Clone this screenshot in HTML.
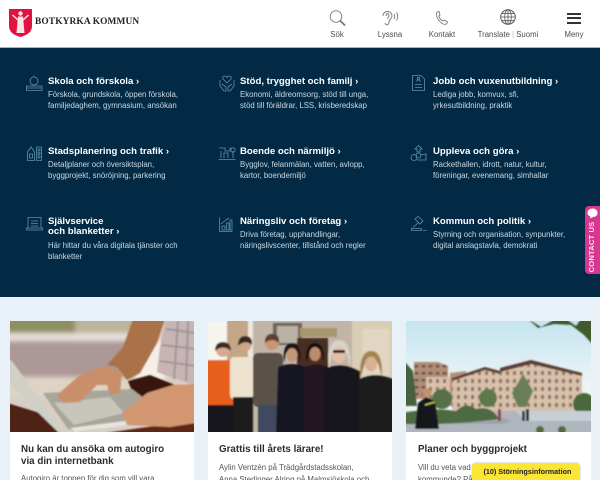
<!DOCTYPE html>
<html lang="sv"><head><meta charset="utf-8"><title>Botkyrka kommun</title>
<style>
*{box-sizing:border-box}
html,body{margin:0;padding:0;width:600px;height:480px;overflow:hidden}
body{background:#e8f1f8;font-family:"Liberation Sans",sans-serif}
#wrap{position:relative;width:600px;height:480px;overflow:hidden;background:#e8f1f8}
.a{position:absolute;white-space:nowrap}
#hdr{left:0;top:0;width:600px;height:48px;background:#fff;border-bottom:1px solid #a9b4bb}
#panel{left:0;top:48px;width:600px;height:249px;background:#022a45}
.nl{font-size:7.8px;color:#4d4d4d;transform:translateX(-50%);top:30px;line-height:10px}
.h{font-size:9.6px;font-weight:bold;color:#fff;line-height:10.5px;margin-top:.8px}
.d{font-size:7.8px;color:#cbd8e0;line-height:11.2px}
.card{background:#fff;top:321px;height:160px;overflow:hidden}
.ct{font-size:9.8px;font-weight:bold;color:#2c2c2c;line-height:11.5px}
.cd{font-size:7.8px;color:#555;line-height:11.5px}
svg{position:absolute;overflow:hidden}
.ic{fill:none;stroke:#5d94ad;stroke-width:.8}
.hi{fill:none;stroke:#777;stroke-width:.9}
</style></head><body><div id="wrap">
<div class="a" id="hdr"></div>
<svg style="left:9px;top:9px" width="23" height="28" viewBox="0 0 23 28"><path d="M0 0H23V17Q23 25 11.500 28Q0 25 0 17Z" fill="#e0123f"/><circle cx="11.500" cy="4.500" r="2.200" fill="#fbe4e8"/><path d="M9 7.500H14L15.500 24H7.500Z" fill="#fbe4e8"/><path d="M3.500 6L9 11M19.500 6L14 11" stroke="#fbe4e8" stroke-width="1.500"/></svg>
<div class="a" style="left:35px;top:14.500px;font:bold 9.400px/14px 'Liberation Serif',serif;color:#222;letter-spacing:.13px">BOTKYRKA KOMMUN</div>

<svg style="left:329px;top:10px" width="18" height="17" viewBox="0 0 18 17"><circle cx="7" cy="6.500" r="5.800" class="hi"/><path d="M11 10.500L16 15.500" stroke="#777" stroke-width="1.800"/></svg>
<svg style="left:381px;top:10px" width="18" height="16" viewBox="0 0 18 16"><path d="M2 6C2 0 11 0 11 6C11 9 8 9 8 12C8 15 5 16 4 13M5 6C5 3 8 3 8 6C8 7 6.500 7 6.500 9" class="hi"/><path d="M13 4Q14.500 6.500 13 9M15.500 2.500Q18 6.500 15.500 10.500" class="hi"/></svg>
<svg style="left:435px;top:11px" width="14" height="14" viewBox="0 0 14 14"><path d="M2 1L4 .5L5 4L3.800 5Q4.500 8 8 10L9.500 9L12.500 11L11.500 13Q8 14.500 4 9.500Q.5 5 2 1Z" class="hi"/></svg>
<svg style="left:500px;top:9px" width="16" height="16" viewBox="0 0 16 16"><circle cx="8" cy="8" r="7.300" fill="none" stroke="#555" stroke-width="1"/><ellipse cx="8" cy="8" rx="3.300" ry="7.300" fill="none" stroke="#555" stroke-width=".8"/><path d="M8 .7V15.300M.7 8H15.300M1.700 4.300H14.300M1.700 11.700H14.300" stroke="#555" stroke-width=".8"/></svg>
<div class="a" style="left:567px;top:12.500px;width:14px;height:2.400px;background:#333"></div>
<div class="a" style="left:567px;top:17px;width:14px;height:2.400px;background:#333"></div>
<div class="a" style="left:567px;top:21.500px;width:14px;height:2.400px;background:#333"></div>
<div class="a nl" style="left:337px">Sök</div>
<div class="a nl" style="left:390px">Lyssna</div>
<div class="a nl" style="left:442px">Kontakt</div>
<div class="a nl" style="left:508px">Translate <span style="color:#bbb">|</span> Suomi</div>
<div class="a nl" style="left:574px">Meny</div>

<div class="a" id="panel"></div>

<svg style="left:26px;top:75px" width="17" height="17" viewBox="0 0 17 17"><circle cx="8" cy="6" r="4" class="ic"/><path d="M8 2V.5M.5 11H16V15.500H.5ZM.5 13H16" class="ic"/></svg>
<svg style="left:219px;top:75px" width="16" height="17" viewBox="0 0 16 17"><path d="M8 8L4 4Q3 1 5.500 1Q7 1 8 2.500Q9 1 10.500 1Q13 1 12 4Z" class="ic"/><path d="M1 5V11L5 16H7V12L3 9M15 5V11L11 16H9V12L13 9" class="ic"/></svg>
<svg style="left:412px;top:75px" width="13" height="16" viewBox="0 0 13 16"><path d="M.5 .5H9L12.500 4V15.500H.5ZM3 9.500H10M3 12.500H10M4.500 6.500Q6.500 3 8.500 6.500" class="ic"/><circle cx="6.500" cy="3.500" r="1.300" class="ic"/></svg>
<svg style="left:27px;top:146px" width="15" height="15" viewBox="0 0 15 15"><path d="M.5 14.500V6L4 1L7.500 6V14.500ZM2.500 8H5.500V12H2.500ZM9.500 1H14.500V14.500H9.500Z" class="ic"/><circle cx="12" cy="4" r="1.100" class="ic"/><circle cx="12" cy="7.500" r="1.100" class="ic"/><circle cx="12" cy="11" r="1.100" class="ic"/></svg>
<svg style="left:218px;top:147px" width="18" height="14" viewBox="0 0 18 14"><path d="M1 1H7V4H12V1H13M3 4V11M15 11V4M.5 12.500H17.500M6 11V6H10V11" class="ic"/><circle cx="15" cy="3" r="2.200" class="ic"/></svg>
<svg style="left:410px;top:145px" width="17" height="17" viewBox="0 0 17 17"><path d="M8.500 .5L12 4H10V7H7V4H5Z" class="ic"/><circle cx="4" cy="12.500" r="3" class="ic"/><circle cx="8.500" cy="10.500" r="2.500" class="ic"/><path d="M10 10L16 9V15H7" class="ic"/></svg>
<svg style="left:26px;top:217px" width="17" height="14" viewBox="0 0 17 14"><path d="M2 .5H15V11H2ZM.5 11H16.500V13H.5ZM5 4H12M5 6.500H12M5 9H12" class="ic"/></svg>
<svg style="left:219px;top:217px" width="14" height="15" viewBox="0 0 14 15"><path d="M.5 .5V14.500H13.500M3 13V9H6V13ZM7.500 13V6H10V13ZM11 13V3H13V13ZM2 7L7 3L10 1" class="ic"/></svg>
<svg style="left:411px;top:216px" width="16" height="15" viewBox="0 0 16 15"><path d="M4 3L7 .5L12 5L9 8ZM7.500 6.500L2 11.500M.5 14.500H10.500V12.500H.5ZM12 14.500H15.500" class="ic"/></svg>

<div class="a h" style="left:48px;top:76px">Skola och förskola ›</div>
<div class="a d" style="left:48px;top:89px">Förskola, grundskola, öppen förskola,<br>familjedaghem, gymnasium, ansökan</div>
<div class="a h" style="left:240px;top:76px">Stöd, trygghet och familj ›</div>
<div class="a d" style="left:240px;top:89px">Ekonomi, äldreomsorg, stöd till unga,<br>stöd till föräldrar, LSS, krisberedskap</div>
<div class="a h" style="left:433px;top:76px">Jobb och vuxenutbildning ›</div>
<div class="a d" style="left:433px;top:89px">Lediga jobb, komvux, sfi,<br>yrkesutbildning, praktik</div>

<div class="a h" style="left:48px;top:146px">Stadsplanering och trafik ›</div>
<div class="a d" style="left:48px;top:159px">Detaljplaner och översiktsplan,<br>byggprojekt, snöröjning, parkering</div>
<div class="a h" style="left:240px;top:146px">Boende och närmiljö ›</div>
<div class="a d" style="left:240px;top:159px">Bygglov, felanmälan, vatten, avlopp,<br>kartor, boendemiljö</div>
<div class="a h" style="left:433px;top:146px">Uppleva och göra ›</div>
<div class="a d" style="left:433px;top:159px">Rackethallen, idrott, natur, kultur,<br>föreningar, evenemang, simhallar</div>

<div class="a h" style="left:48px;top:216px">Självservice<br>och blanketter ›</div>
<div class="a d" style="left:48px;top:240px">Här hittar du våra digitala tjänster och<br>blanketter</div>
<div class="a h" style="left:240px;top:216px">Näringsliv och företag ›</div>
<div class="a d" style="left:240px;top:229px">Driva företag, upphandlingar,<br>näringslivscenter, tillstånd och regler</div>
<div class="a h" style="left:433px;top:216px">Kommun och politik ›</div>
<div class="a d" style="left:433px;top:229px">Styrning och organisation, synpunkter,<br>digital anslagstavla, demokrati</div>

<div class="a" style="left:585px;top:206px;width:20px;height:68px;background:#d9378f;border-radius:4px"></div>
<svg style="left:587px;top:208px" width="11" height="11" viewBox="0 0 11 11"><path d="M5.500 .5C9 .5 10.500 2.500 10.500 5C10.500 7.500 8.500 9 6 9L3 10.500L3.500 8.500C1.500 8 .5 6.500 .5 5C.5 2.500 2.500 .5 5.500 .5Z" fill="#fff"/></svg>
<div class="a" style="left:592px;top:246.500px;transform:translate(-50%,-50%) rotate(-90deg);font:bold 7.600px/10px 'Liberation Sans',sans-serif;color:#f6e3ee;letter-spacing:.15px">CONTACT US</div>

<!-- Card 1 -->
<div class="a card" style="left:10px;width:184px"></div>
<svg style="left:10px;top:321px" width="184" height="111" viewBox="0 0 184 111"><defs><filter id="b1" x="-10%" y="-10%" width="120%" height="120%"><feGaussianBlur stdDeviation="2.500"/></filter><filter id="b0" x="-5%" y="-5%" width="110%" height="110%"><feGaussianBlur stdDeviation=".8"/></filter></defs>
<rect width="184" height="111" fill="#d8cfc4"/>
<g filter="url(#b1)"><rect x="-5" y="-5" width="70" height="17" fill="#8e8f60"/><rect x="65" y="-5" width="60" height="17" fill="#bdb49e"/><rect x="-5" y="12" width="130" height="8" fill="#e6dfd8"/><rect x="-5" y="20" width="130" height="36" fill="#ad9898"/><rect x="-5" y="56" width="125" height="20" fill="#ded4c4"/><rect x="125" y="20" width="30" height="40" fill="#f4efe8"/></g>
<g filter="url(#b0)">
<path d="M155 0H186V65L147 51L150 26Z" fill="#c8b4b2"/><path d="M156 8L186 12M152 24L186 28M150 40L186 45M168 0L164 58M178 0L176 60" stroke="#8f8a92" stroke-width="1.800" opacity=".8"/>
<path d="M123 -2H155L147 22L130 52L117 59L107 46L97 44L113 26Z" fill="#a9724a"/>
<path d="M118 60L140 54L165 64L150 78L125 78Z" fill="#38170f"/>
<path d="M-3 82L30 92L54 113H-3Z" fill="#4f2016"/><path d="M88 113L186 99V113Z" fill="#5e2818"/>
<path d="M-2 38L2 40L55 113H50L-2 62Z" fill="#d0d0c8"/>
<path d="M33 72L122 68L135 78L118 92L125 102L70 111L58 108Z" fill="#a8a59b"/><path d="M44 82L100 76L114 92L64 104Z" fill="#c8c5bb"/><path d="M60 107L122 99L125 103L66 111Z" fill="#e6e4de"/>
<path d="M47 74L70 54L93 45L112 51L110 72L100 74L97 64L87 64L70 81L53 82Z" fill="#c98f6b"/>
<path d="M112 92L137 72L163 64L186 63V102L160 106L117 104Z" fill="#d29670"/>
</g></svg>
<div class="a ct" style="left:21px;top:444px">Nu kan du ansöka om autogiro<br>via din internetbank</div>
<div class="a cd" style="left:21px;top:473px">Autogiro är toppen för dig som vill vara</div>

<!-- Card 2 -->
<div class="a card" style="left:208px;width:184px"></div>
<svg style="left:208px;top:321px" width="184" height="111" viewBox="0 0 184 111"><rect width="184" height="111" fill="#c2b5a8"/><g filter="url(#b0)">
<rect x="-3" y="-3" width="22" height="50" fill="#f6f4ef"/><rect x="19" y="-3" width="21" height="60" fill="#c4a586"/><rect x="40" y="-3" width="5" height="40" fill="#eee8dd"/>
<rect x="144" y="-3" width="43" height="70" fill="#d9cdb5"/><rect x="155" y="8" width="26" height="50" fill="#e0d6c2"/>
<rect x="65" y="2" width="29" height="22" fill="#6f665a"/><rect x="69" y="5" width="21" height="17" fill="#b9b2a5"/>
<rect x="89" y="17" width="31" height="30" fill="#4a2e24"/><rect x="92" y="7" width="37" height="9" fill="#a8966e"/>
<rect x="-3" y="39" width="34" height="45" rx="4" fill="#e85e1c"/><rect x="-3" y="84" width="32" height="30" fill="#14131a"/><circle cx="15" cy="29" r="7" fill="#d6aa90"/><path d="M7 30Q7 21 15 21Q23 21 23 30Q15 23 7 30Z" fill="#3c2a22"/>
<rect x="22" y="36" width="23" height="42" rx="4" fill="#ece2cd"/><rect x="25" y="76" width="20" height="38" fill="#1b1a1e"/><circle cx="37" cy="24" r="6.500" fill="#cfa68c"/><path d="M30 25Q30 15 37 15Q45 15 44 24Q37 18 30 25Z" fill="#382a22"/>
<rect x="45" y="32" width="30" height="54" rx="5" fill="#5a5148"/><rect x="50" y="84" width="22" height="30" fill="#3f4a5e"/><circle cx="64" cy="22" r="7" fill="#c79676"/><path d="M57 22Q57 13 64 13Q72 13 71 22Q64 16 57 22Z" fill="#5c4030"/>
<path d="M70 46Q84 40 98 46V114H68Z" fill="#191920"/><path d="M76 42Q74 22 84 22Q94 22 92 42L90 32Q84 26 78 32Z" fill="#1c1614"/><ellipse cx="84" cy="34" rx="5.500" ry="7" fill="#c39778"/>
<path d="M96 46Q108 41 120 46V114H96Z" fill="#221820"/><path d="M98 42Q97 22 107 22Q117 22 116 42L113 30Q107 25 102 30Z" fill="#141010"/><ellipse cx="107" cy="33" rx="5.500" ry="7" fill="#bd8c6e"/>
<path d="M116 48Q134 40 152 50V114H116Z" fill="#16161a"/><path d="M121 47Q118 20 131 19Q144 20 142 47L139 33Q131 26 124 33Z" fill="#d8d2c8"/><ellipse cx="131" cy="34" rx="6.500" ry="8" fill="#e3bfa8"/><rect x="125" y="29" width="12" height="3" fill="#222"/>
<path d="M151 58Q167 50 186 58V114H151Z" fill="#1a1a1e"/><path d="M152 58Q151 30 163 30Q175 30 174 56L170 42Q163 36 157 42Z" fill="#a6824f"/><ellipse cx="163" cy="43" rx="6" ry="7.500" fill="#d8b094"/>
</g></svg>
<div class="a ct" style="left:219px;top:444px">Grattis till årets lärare!</div>
<div class="a cd" style="left:219px;top:462px">Aylin Ventzén på Trädgårdstadsskolan,<br>Anna Sterlinger Alring på Malmsjöskola och</div>

<!-- Card 3 -->
<div class="a card" style="left:406px;width:185px"></div>
<svg style="left:406px;top:321px" width="185" height="111" viewBox="0 0 185 111"><defs><linearGradient id="sky" x1="0" y1="0" x2="0" y2="1"><stop offset="0" stop-color="#c4e4f0"/><stop offset=".6" stop-color="#eef5f6"/></linearGradient><pattern id="win" width="7" height="8" patternUnits="userSpaceOnUse"><rect width="7" height="8" fill="#d8c0aa"/><rect x="2" y="2" width="3" height="4" fill="#8a766a"/></pattern><pattern id="win2" width="7" height="7" patternUnits="userSpaceOnUse"><rect width="7" height="7" fill="#b08d76"/><rect x="1.500" y="2" width="4" height="2.500" fill="#6c5548"/></pattern></defs>
<rect width="185" height="111" fill="url(#sky)"/><g filter="url(#b0)">
<path d="M122 -2L135 6L150 -2H160L170 5L175 -2H187V24L178 14L165 4L148 3L132 7Z" fill="#3f5a2f"/>
<path d="M8 41L32 41L42 45V78H8Z" fill="url(#win2)"/>
<path d="M20 56H46L60 52V85H20Z" fill="url(#win)"/><path d="M44 52L60 50V85H44Z" fill="#b59078"/>
<path d="M46 57L79 46L94 50V90H46Z" fill="url(#win)"/><path d="M46 57L79 46L94 50V53L79 49L46 60Z" fill="#5a4030"/>
<path d="M94 47L125 39L176 52V90H94Z" fill="url(#win)"/><path d="M94 47L125 39L176 52V55L125 43L94 51Z" fill="#5b4032"/>
<path d="M-2 40L7 50L11 85H-2Z" fill="#47603c"/><circle cx="36" cy="78" r="10" fill="#567147"/><circle cx="82" cy="77" r="9" fill="#5d7848"/><path d="M117 53L127 70L120 86H112L106 72Z" fill="#6a7f58"/><circle cx="178" cy="83" r="11" fill="#48693d"/>
<rect x="-2" y="90" width="190" height="23" fill="#b0b6bd"/><path d="M110 90H187V100H120Z" fill="#c6ced6"/><path d="M-2 103H95Q112 100 95 97L10 92H-2Z" fill="#9ca4aa"/>
<path d="M-2 92Q25 86 50 90Q60 80 70 88Q85 84 93 98Q50 104 -2 103Z" fill="#4e6a42"/>
<path d="M12 82L20 76L29 80L33 108H9Z" fill="#17171b"/><circle cx="21" cy="72" r="4.500" fill="#c2916e"/><path d="M19 84L29 81" stroke="#b6d24b" stroke-width="1.500"/>
<circle cx="134" cy="109" r="4" fill="#506b3e"/><circle cx="156" cy="109" r="4" fill="#506b3e"/><rect x="92" y="88" width="3" height="12" fill="#9c3b3b"/><rect x="116" y="90" width="3" height="10" fill="#2e3a4a"/><rect x="120" y="88" width="3" height="12" fill="#2b2b2b"/></g></svg>
<div class="a ct" style="left:418px;top:444px">Planer och byggprojekt</div>
<div class="a cd" style="left:418px;top:462px">Vill du veta vad<br>kommunde? På</div>

<div class="a" style="left:471.500px;top:463px;width:108.500px;height:22px;background:#fbe635;border-radius:4px;box-shadow:0 0 2px rgba(0,0,0,.25);font-size:7.200px;font-weight:bold;color:#222;padding:4px 0 0 12px;line-height:10px">(10) Störningsinformation</div>
</div></body></html>
